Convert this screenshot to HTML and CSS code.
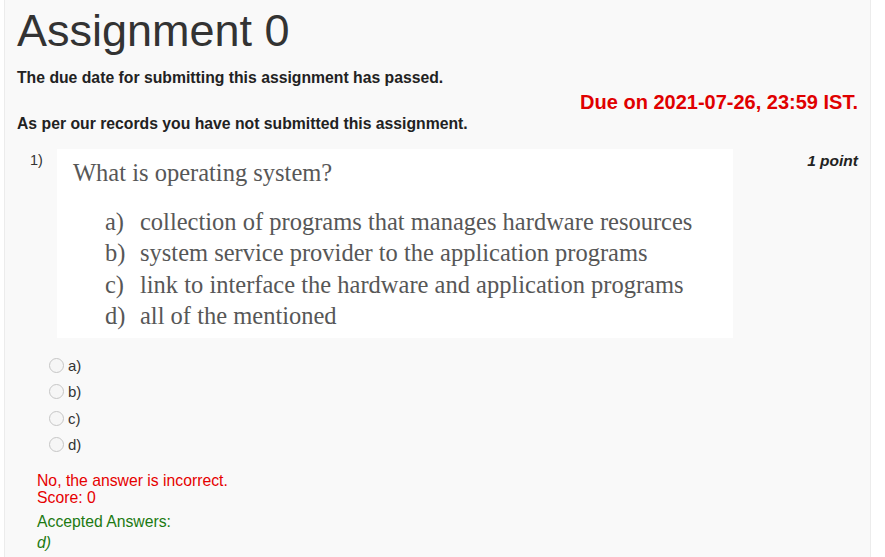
FILE: index.html
```html
<!DOCTYPE html>
<html>
<head>
<meta charset="utf-8">
<link rel="stylesheet" href="styles.css">
</head>
<body>
<div class="panel">
  <h1 class="title">Assignment 0</h1>
  <p class="notice">The due date for submitting this assignment has passed.</p>
  <div class="due-row"><span class="due">Due on 2021-07-26, 23:59 IST.</span></div>
  <p class="notice records">As per our records you have not submitted this assignment.</p>

  <div class="question">
    <span class="qnum">1)</span>
    <div class="qbody">
      <div class="qimage">
        <div class="qtext">What is operating system?</div>
        <ol class="qopts">
          <li><span class="ol">a)</span><span class="ot">collection of programs that manages hardware resources</span></li>
          <li><span class="ol">b)</span><span class="ot">system service provider to the application programs</span></li>
          <li><span class="ol">c)</span><span class="ot">link to interface the hardware and application programs</span></li>
          <li><span class="ol">d)</span><span class="ot">all of the mentioned</span></li>
        </ol>
      </div>
    </div>
    <span class="points">1 point</span>
  </div>

  <ul class="choices">
    <li><span class="radio"></span>a)</li>
    <li><span class="radio"></span>b)</li>
    <li><span class="radio"></span>c)</li>
    <li><span class="radio"></span>d)</li>
  </ul>

  <div class="feedback">
    <div class="wrong">No, the answer is incorrect.<br>Score: 0</div>
    <div class="accepted">Accepted Answers:<br><em>d)</em></div>
  </div>
</div>
</body>
</html>
```

FILE: styles.css
```css
html, body {
  margin: 0;
  padding: 0;
  background: #ffffff;
}
body {
  font-family: "Liberation Sans", Arial, sans-serif;
  color: #333333;
}
.panel {
  margin-left: 4px;
  width: 841px;
  min-height: 600px;
  background: #f9f9f9;
  border-left: 1px solid #ececec;
  border-right: 1px solid #ececec;
  padding: 0 12px 20px 12px;
  box-sizing: content-box;
}
.title {
  margin: 0;
  padding-top: 6px;
  font-size: 45px;
  font-weight: normal;
  line-height: 50px;
  color: #333333;
}
.notice {
  margin: 13px 0 0 0;
  font-size: 15.75px;
  font-weight: bold;
  line-height: 17px;
  color: #222222;
}
.records {
  margin-top: 0;
}
.due-row {
  display: flex;
  justify-content: flex-end;
  margin-top: 0;
  height: 29px;
  align-items: center;
}
.due {
  color: #e00000;
  font-weight: bold;
  font-size: 20px;
  line-height: 22px;
  padding-top: 2px;
}
.question {
  display: flex;
  align-items: flex-start;
  margin-top: 17px;
}
.qnum {
  font-size: 14.5px;
  margin-left: 13px;
  width: 27px;
  padding-top: 3px;
}
.qbody {
  flex: 0 0 auto;
}
.qimage {
  width: 676px;
  height: 189px;
  background: #ffffff;
  box-sizing: border-box;
  padding: 10px 0 0 16px;
  font-family: "Liberation Serif", "Times New Roman", serif;
  color: #575757;
}
.qtext {
  font-size: 24.5px;
  line-height: 28px;
}
.qopts {
  list-style: none;
  margin: 19px 0 0 32px;
  padding: 0;
  font-size: 24.5px;
  line-height: 31.3px;
}
.qopts li {
  display: flex;
}
.ol {
  width: 35px;
}
.points {
  margin-left: auto;
  font-weight: bold;
  font-style: italic;
  font-size: 15.5px;
  padding-top: 3px;
  color: #222222;
}
.choices {
  list-style: none;
  margin: 14px 0 0 32px;
  padding: 0;
  font-size: 15px;
}
.choices li {
  display: flex;
  align-items: center;
  height: 26.5px;
  color: #333333;
}
.radio {
  display: inline-block;
  width: 15px;
  height: 15px;
  border: 1px solid #c6c6c6;
  border-radius: 50%;
  background: #f6f6f6;
  margin-right: 4px;
  box-sizing: border-box;
}
.feedback {
  margin: 14px 0 0 20px;
  font-size: 15.75px;
  line-height: 17px;
}
.wrong {
  color: #e60000;
}
.accepted {
  margin-top: 6px;
  line-height: 20.5px;
  color: #1c7a12;
}
.accepted em {
  font-style: italic;
}
```
